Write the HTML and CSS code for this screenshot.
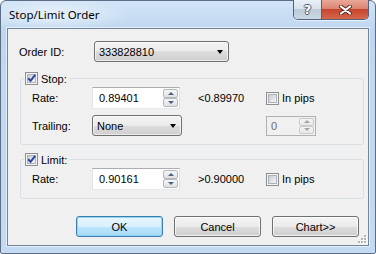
FILE: index.html
```html
<!DOCTYPE html>
<html lang="en">
<head>
    <meta charset="UTF-8">
    <meta name="viewport" content="width=device-width, initial-scale=1.0">
    <title>Stop/Limit Order</title>
    <link rel="stylesheet" href="styles.css">
</head>
<body>
    <div class="window">
        <div class="titlebar">
            <div class="title">Stop/Limit Order</div>
            <div class="caption-buttons">
                <div class="cap-btn help">?</div>
                <div class="cap-btn close">
                    <svg width="13" height="10" viewBox="0 0 13 10">
                        <path d="M2 1.5 L11 8.5 M11 1.5 L2 8.5" stroke="#5a2a24" stroke-width="4" stroke-linecap="round"/>
                        <path d="M2 1.5 L11 8.5 M11 1.5 L2 8.5" stroke="#fff" stroke-width="2.2" stroke-linecap="round"/>
                    </svg>
                </div>
            </div>
        </div>

        <div class="client">
            <div class="order-row">
                <span class="order-label">Order ID:</span>
                <div class="combo order-combo"><span>333828810</span><span class="arrow"></span></div>
            </div>

            <!-- Stop -->
            <div class="group">
                <div class="legend">
                    <span class="checkbox checked">
                        <svg width="13" height="13" viewBox="0 0 13 13"><path d="M3.2 6.2 L5.6 8.8 L10.2 2.8" fill="none" stroke="#2c46a0" stroke-width="2"/></svg>
                    </span>
                    <span>Stop:</span>
                </div>
                <div class="row">
                    <span class="label">Rate:</span>
                    <div class="spin">
                        <span>0.89401</span>
                        <div class="spin-buttons">
                            <span class="spin-btn"><i class="up"></i></span>
                            <span class="spin-btn"><i class="down"></i></span>
                        </div>
                    </div>
                    <span class="value">&lt;0.89970</span>
                    <div class="check-label"><span class="checkbox"></span>In pips</div>
                </div>
                <div class="row trailing">
                    <span class="label">Trailing:</span>
                    <div class="combo trailing-combo"><span>None</span><span class="arrow"></span></div>
                    <span></span>
                    <div class="spin small disabled">
                        <span>0</span>
                        <div class="spin-buttons">
                            <span class="spin-btn"><i class="up"></i></span>
                            <span class="spin-btn"><i class="down"></i></span>
                        </div>
                    </div>
                </div>
            </div>

            <!-- Limit -->
            <div class="group limit-group">
                <div class="legend">
                    <span class="checkbox checked">
                        <svg width="13" height="13" viewBox="0 0 13 13"><path d="M3.2 6.2 L5.6 8.8 L10.2 2.8" fill="none" stroke="#2c46a0" stroke-width="2"/></svg>
                    </span>
                    <span>Limit:</span>
                </div>
                <div class="row">
                    <span class="label">Rate:</span>
                    <div class="spin">
                        <span>0.90161</span>
                        <div class="spin-buttons">
                            <span class="spin-btn"><i class="up"></i></span>
                            <span class="spin-btn"><i class="down"></i></span>
                        </div>
                    </div>
                    <span class="value">&gt;0.90000</span>
                    <div class="check-label"><span class="checkbox"></span>In pips</div>
                </div>
            </div>

            <div class="actions">
                <button class="btn default">OK</button>
                <button class="btn">Cancel</button>
                <button class="btn">Chart&gt;&gt;</button>
            </div>

            <div class="grip">
                <svg width="10" height="10" viewBox="0 0 10 10">
                    <g fill="#fff">
                        <rect x="8" y="2" width="2" height="2"/><rect x="5" y="5" width="2" height="2"/><rect x="8" y="5" width="2" height="2"/>
                        <rect x="2" y="8" width="2" height="2"/><rect x="5" y="8" width="2" height="2"/><rect x="8" y="8" width="2" height="2"/>
                    </g>
                    <g fill="#b5b5b5">
                        <rect x="7" y="1" width="2" height="2"/><rect x="4" y="4" width="2" height="2"/><rect x="7" y="4" width="2" height="2"/>
                        <rect x="1" y="7" width="2" height="2"/><rect x="4" y="7" width="2" height="2"/><rect x="7" y="7" width="2" height="2"/>
                    </g>
                </svg>
            </div>
        </div>
    </div>
</body>
</html>
```

FILE: styles.css
```css
* {
    box-sizing: border-box;
    margin: 0;
    padding: 0;
}

body {
    background: #fff;
    font-family: "Liberation Sans", Arial, sans-serif;
    font-size: 11px;
    color: #000;
}

.window {
    width: 376px;
    height: 254px;
    display: flex;
    flex-direction: column;
    padding: 0 6px 7px 6px;
    border: 1px solid #5d6e84;
    border-radius: 6px 6px 2px 2px;
    background:
        radial-gradient(ellipse 80px 16px at 52px 14px, rgba(255, 255, 255, 0.6), rgba(255, 255, 255, 0)),
        linear-gradient(#d2e4f7, #bfd7f0 28px, #c3daf2);
}

.titlebar {
    height: 27px;
    display: flex;
    align-items: flex-start;
}

.title {
    align-self: center;
    padding: 0 0 1px 2px;
    font-family: "Noto Sans", sans-serif;
    font-size: 11.5px;
    color: #000;
}

.caption-buttons {
    margin: -1px 0 0 auto;
    display: flex;
    border: 1px solid #53627a;
    border-top: none;
    border-radius: 0 0 5px 5px;
    overflow: hidden;
    box-shadow: 0 1px 0 rgba(255, 255, 255, 0.6);
}

.cap-btn {
    height: 19px;
    display: flex;
    align-items: center;
    justify-content: center;
}

.help {
    width: 28px;
    border-right: 1px solid #53627a;
    background: linear-gradient(#e9f0f7 0%, #d8e2ec 45%, #bccad9 50%, #cad7e4 100%);
    color: #fff;
    font-family: "DejaVu Sans", sans-serif;
    font-weight: bold;
    font-size: 13px;
    text-shadow: 1px 0 0 #4b5a6c, -1px 0 0 #4b5a6c, 0 1px 0 #4b5a6c, 0 -1px 0 #4b5a6c;
}

.close {
    width: 46px;
    background: linear-gradient(#eaa899 0%, #db8472 45%, #c7452f 50%, #d5684c 100%);
}

.client {
    flex: 1;
    position: relative;
    background: #f0f0f0;
    border: 1px solid #72859b;
    box-shadow: 0 0 0 1px rgba(255, 255, 255, 0.55);
}

.order-row {
    display: flex;
    align-items: center;
    padding: 12px 0 0 11px;
}

.order-label {
    width: 75px;
}

.combo {
    height: 21px;
    display: flex;
    align-items: center;
    justify-content: space-between;
    padding: 0 5px 0 4px;
    border: 1px solid #707070;
    border-radius: 3px;
    background: linear-gradient(#f3f3f3 0%, #ebebeb 50%, #dddddd 50%, #cfcfcf 100%);
    box-shadow: inset 0 0 0 1px rgba(255, 255, 255, 0.6);
}

.order-combo {
    width: 135px;
}

.trailing-combo {
    width: 90px;
}

.arrow {
    width: 0;
    height: 0;
    border-left: 3.5px solid transparent;
    border-right: 3.5px solid transparent;
    border-top: 4px solid #000;
}

.group {
    margin: 16px 4px 0 12px;
    padding-bottom: 8px;
    border: 1px solid #d5dfe5;
    border-radius: 3px;
}

.limit-group {
    margin-top: 14px;
}

.legend {
    width: max-content;
    height: 13px;
    display: flex;
    align-items: center;
    gap: 3px;
    margin: -7px 0 0 3px;
    padding: 0 2px 0 1px;
    background: #f0f0f0;
}

.checkbox {
    position: relative;
    width: 13px;
    height: 13px;
    display: flex;
    padding: 1px;
    border: 1px solid #8e8f8f;
    background: #f4f4f4;
}

.checkbox::before {
    content: '';
    flex: 1;
    border: 1px solid #aeb3b9;
    background: linear-gradient(135deg, #c9cdd3, #f4f5f6);
}

.checkbox svg {
    position: absolute;
    left: -1px;
    top: -1px;
}

.row {
    display: grid;
    grid-template-columns: 60px 88px 86px auto;
    align-items: center;
    height: 22px;
    margin-top: 2px;
    padding-left: 11px;
}

.row.trailing {
    height: 21px;
    margin-top: 6px;
}

.spin {
    height: 22px;
    display: flex;
    align-items: center;
    justify-content: space-between;
    padding-left: 6px;
    border: 1px solid;
    border-color: #abadb3 #dbdfe6 #e3e9ef #e2e3ea;
    background: #fff;
}

.spin-buttons {
    align-self: stretch;
    display: flex;
    flex-direction: column;
    padding: 1px 1px 1px 0;
}

.spin-btn {
    width: 15px;
    height: 9px;
    display: flex;
    align-items: center;
    justify-content: center;
    border: 1px solid #b5b9bf;
    border-radius: 2px;
    background: linear-gradient(#f6f6f6, #e0e0e0);
}

.spin-btn i {
    width: 0;
    height: 0;
    border-left: 3px solid transparent;
    border-right: 3px solid transparent;
}

.spin-btn .up {
    border-bottom: 3px solid #4d6185;
}

.spin-btn .down {
    border-top: 3px solid #4d6185;
}

.spin.small {
    width: 50px;
    height: 20px;
    padding-left: 4px;
}

.spin.disabled {
    border-color: #adb2b5;
    background: #f0f0f0;
    color: #6d6d6d;
}

.spin.disabled .spin-btn {
    border-color: #c9cbcd;
    background: linear-gradient(#f4f4f4, #e8e8e8);
}

.spin.disabled .spin-btn .up {
    border-bottom-color: #a3a3a3;
}

.spin.disabled .spin-btn .down {
    border-top-color: #a3a3a3;
}

.value {
    padding-left: 18px;
}

.check-label {
    display: flex;
    align-items: center;
    gap: 3px;
}

.actions {
    display: flex;
    justify-content: flex-end;
    gap: 11px;
    margin-top: 17px;
    padding-right: 9px;
}

.btn {
    width: 87px;
    height: 21px;
    font-family: "Liberation Sans", Arial, sans-serif;
    font-size: 11px;
    color: #000;
    border: 1px solid #707070;
    border-radius: 3px;
    background: linear-gradient(#f3f3f3 0%, #ebebeb 50%, #dddddd 50%, #cfcfcf 100%);
    box-shadow: inset 0 0 0 1px rgba(255, 255, 255, 0.7);
}

.btn.default {
    border-color: #3c7fb1;
    background: linear-gradient(#eaf6fd 0%, #d9f0fc 50%, #bee6fd 50%, #a7d9f5 100%);
    box-shadow: inset 0 0 0 1px #8fd6f7;
}

.grip {
    position: absolute;
    right: 1px;
    bottom: 1px;
    width: 10px;
    height: 10px;
}
```
